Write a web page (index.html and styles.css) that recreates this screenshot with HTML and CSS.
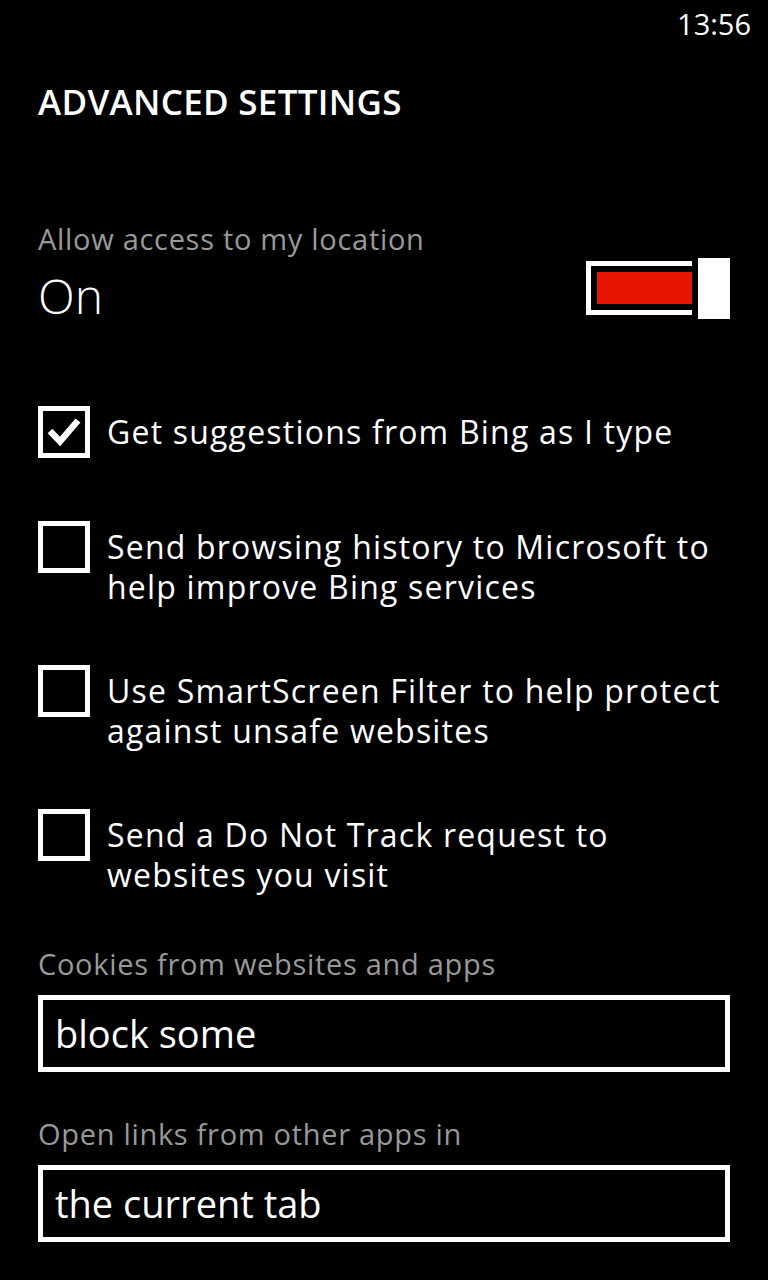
FILE: index.html
```html
<!DOCTYPE html>
<html lang="en">
<head>
<meta charset="utf-8">
<title>Advanced settings</title>
<link rel="stylesheet" href="styles.css">
</head>
<body>
<div class="statusbar"><span class="clock">13:56</span></div>
<main class="page">
  <h1 class="title">ADVANCED SETTINGS</h1>

  <div class="label location-label">Allow access to my location</div>
  <div class="toggle-row">
    <span class="toggle-value">On</span>
    <div class="toggle">
      <div class="track"><div class="fill"></div></div>
      <div class="thumb"></div>
    </div>
  </div>

  <div class="checks">
    <div class="check-row">
      <div class="checkbox">
        <svg class="tick" viewBox="0 0 42 42" width="42" height="42"><path d="M7 20 L17 30.5 L35 9.5" fill="none" stroke="#fff" stroke-width="6.5" stroke-linejoin="miter"/></svg>
      </div>
      <div class="check-text">Get suggestions from Bing as I type</div>
    </div>
    <div class="check-row">
      <div class="checkbox"></div>
      <div class="check-text">Send browsing history to Microsoft to<br>help improve Bing services</div>
    </div>
    <div class="check-row">
      <div class="checkbox"></div>
      <div class="check-text">Use SmartScreen Filter to help protect<br>against unsafe websites</div>
    </div>
    <div class="check-row">
      <div class="checkbox"></div>
      <div class="check-text">Send a Do Not Track request to<br>websites you visit</div>
    </div>
  </div>

  <div class="label cookies-label">Cookies from websites and apps</div>
  <div class="picker">block some</div>

  <div class="label links-label">Open links from other apps in</div>
  <div class="picker">the current tab</div>
</main>
</body>
</html>
```

FILE: styles.css
```css
html, body {
  margin: 0;
  padding: 0;
  background: #000;
  color: #fff;
  font-family: "Open Sans", "Noto Sans", "Liberation Sans", sans-serif;
}

body {
  width: 768px;
  height: 1280px;
  overflow: hidden;
}

.statusbar {
  display: flex;
  justify-content: flex-end;
  padding: 4px 17px 0 0;
  height: 40px;
}

.clock {
  font-size: 29px;
  line-height: 40px;
  font-weight: 400;
}

.page {
  padding: 0 38px;
}

.title {
  margin: 36px 0 0 0;
  font-size: 35px;
  line-height: 44px;
  font-weight: 600;
  letter-spacing: 0.3px;
}

.label {
  color: #999;
  font-size: 29px;
  line-height: 36px;
  letter-spacing: 0.7px;
}

.location-label {
  margin-top: 97px;
}

.toggle-row {
  display: flex;
  justify-content: space-between;
  align-items: flex-start;
  margin-top: 1px;
}

.toggle-value {
  margin-top: 10px;
  font-size: 48px;
  line-height: 56px;
  font-weight: 300;
}

.toggle {
  display: flex;
  align-items: flex-start;
  width: 144px;
  height: 61px;
}

.track {
  margin-top: 3px;
  width: 106px;
  height: 54px;
  box-sizing: border-box;
  border: 5px solid #fff;
  border-right: 0;
  padding: 6px 0 6px 6px;
  display: flex;
}

.fill {
  flex: 1;
  background: #e51400;
}

.thumb {
  margin-left: 6px;
  width: 32px;
  height: 61px;
  background: #fff;
}

.checks {
  margin-top: 82px;
  display: flex;
  flex-direction: column;
  gap: 58px;
}

.check-row {
  display: flex;
  align-items: flex-start;
  min-height: 57px;
}

.checkbox {
  width: 52px;
  height: 52px;
  box-sizing: border-box;
  border: 5px solid #fff;
  flex: none;
}

.tick {
  display: block;
}

.check-text {
  margin: 6px 0 0 17px;
  font-size: 32px;
  line-height: 40px;
  letter-spacing: 1.2px;
  white-space: nowrap;
}

.cookies-label {
  margin-top: 51px;
}

.links-label {
  margin-top: 44px;
}

.picker {
  margin-top: 13px;
  height: 77px;
  box-sizing: border-box;
  border: 5px solid #fff;
  padding-left: 12px;
  font-size: 38px;
  line-height: 67px;
}
```
